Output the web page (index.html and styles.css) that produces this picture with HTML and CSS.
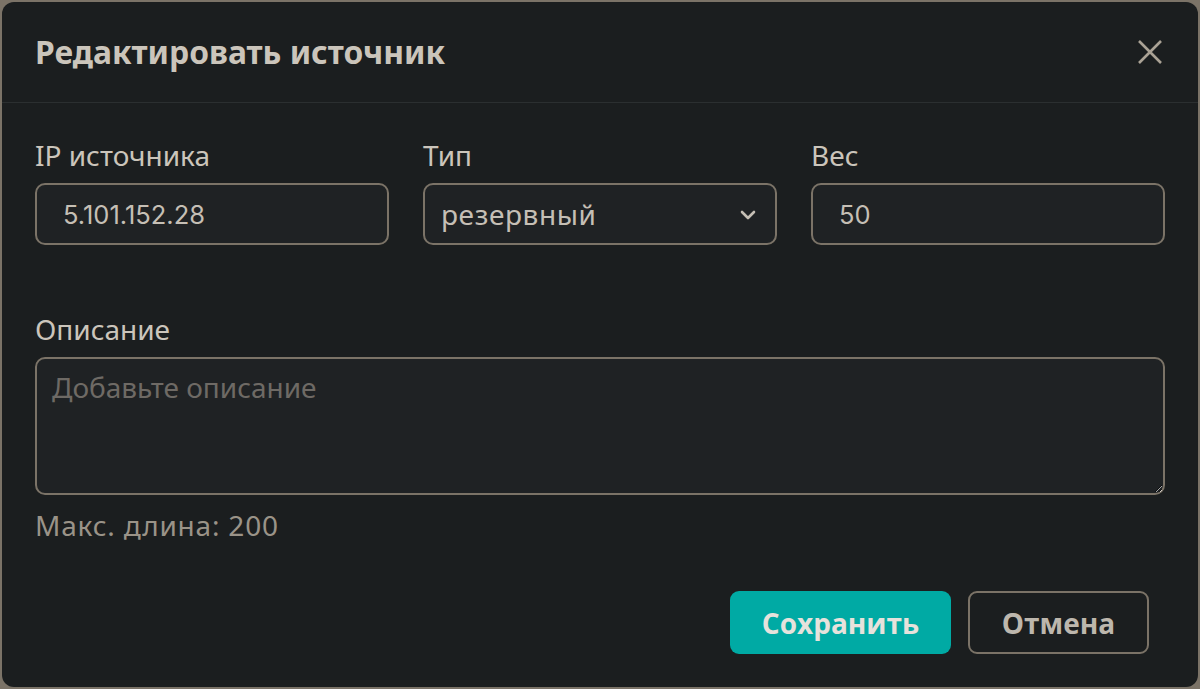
FILE: index.html
```html
<!DOCTYPE html>
<html lang="ru">
<head>
<meta charset="utf-8">
<title>Редактировать источник</title>
<link rel="stylesheet" href="styles.css">
</head>
<body>
<div class="dialog">
  <div class="dialog-header">
    <h2 class="dialog-title">Редактировать источник</h2>
    <button class="close-btn" aria-label="Закрыть">
      <svg width="26" height="26" viewBox="0 0 26 26"><path d="M2 2 L24 24 M24 2 L2 24" stroke="currentColor" stroke-width="2.6" fill="none"/></svg>
    </button>
  </div>
  <div class="dialog-body">
    <div class="row">
      <div class="field">
        <label class="label">IP источника</label>
        <input class="input" type="text" value="5.101.152.28">
      </div>
      <div class="field">
        <label class="label">Тип</label>
        <div class="select">
          <span class="select-value">резервный</span>
          <svg class="chevron" width="16" height="10" viewBox="0 0 16 10"><path d="M2 2 L8 8 L14 2" stroke="currentColor" stroke-width="2.6" fill="none" stroke-linecap="round" stroke-linejoin="round"/></svg>
        </div>
      </div>
      <div class="field">
        <label class="label">Вес</label>
        <input class="input" type="text" value="50">
      </div>
    </div>
    <div class="field desc">
      <label class="label">Описание</label>
      <textarea class="textarea" placeholder="Добавьте описание"></textarea>
      <div class="hint">Макс. длина: 200</div>
    </div>
    <div class="footer">
      <button class="btn btn-primary">Сохранить</button>
      <button class="btn btn-secondary">Отмена</button>
    </div>
  </div>
</div>
</body>
</html>
```
FILE: styles.css
```css
* { box-sizing: border-box; }
html, body { margin: 0; padding: 0; }
body {
  width: 1200px;
  height: 689px;
  background: #7b7367;
  padding: 2px;
  font-family: "Noto Sans", "Open Sans", sans-serif;
  color: #c9c3b9;
  overflow: hidden;
}
.dialog {
  width: 1196px;
  height: 685px;
  background: #1b1e1f;
  border-radius: 12px;
  display: flex;
  flex-direction: column;
}
.dialog-header {
  height: 101px;
  border-bottom: 1px solid #2b2f30;
  display: flex;
  align-items: center;
  justify-content: space-between;
  padding: 0 35px 0 33px;
}
.dialog-title {
  margin: 0;
  font-size: 31.8px;
  font-weight: 700;
  color: #cbc5bb;
  line-height: 38px;
}
.close-btn {
  background: none;
  border: 0;
  padding: 0;
  width: 26px;
  height: 26px;
  color: #aaa295;
  display: flex;
}
.dialog-body {
  padding: 35px 33px 33px 33px;
  display: flex;
  flex-direction: column;
  flex: 1;
}
.row {
  display: grid;
  grid-template-columns: minmax(0, 1fr) minmax(0, 1fr) minmax(0, 1fr);
  column-gap: 34px;
}
.field { display: flex; flex-direction: column; min-width: 0; }
.label {
  font-size: 28px;
  line-height: 34px;
  margin-bottom: 11px;
  color: #cbc5bb;
}
.input {
  width: 100%;
  height: 62px;
  background: #1f2224;
  border: 2px solid #7b7367;
  border-radius: 10px;
  padding: 0 26px;
  font-family: Inter, "Noto Sans", sans-serif;
  font-size: 25.5px;
  color: #c5bfb5;
  outline: none;
}
.select {
  height: 62px;
  background: #1f2224;
  border: 2px solid #7b7367;
  border-radius: 10px;
  padding: 0 19px 0 16px;
  display: flex;
  align-items: center;
  justify-content: space-between;
}
.select-value {
  font-size: 28px;
  letter-spacing: 0.6px;
  color: #c5bfb5;
  line-height: 34px;
}
.chevron { color: #c5bfb5; margin-top: 2px; }
.desc { margin-top: 67px; }
.textarea {
  height: 138px;
  background: #1f2224;
  border: 2px solid #7b7367;
  border-radius: 10px;
  padding: 11px 15px;
  font-family: "Noto Sans", sans-serif;
  font-size: 28px;
  line-height: 34px;
  color: #c5bfb5;
  resize: vertical;
  outline: none;
  color-scheme: dark;
}
.textarea::placeholder { color: #6e6a65; }
.hint {
  margin-top: 13px;
  font-size: 28px;
  line-height: 34px;
  letter-spacing: 0.8px;
  color: #9a9388;
}
.footer {
  margin-top: auto;
  display: flex;
  justify-content: flex-end;
  gap: 17px;
  padding-right: 16px;
}
.btn {
  height: 63px;
  border-radius: 9px;
  font-family: "Open Sans", "Noto Sans", sans-serif;
  font-size: 28px;
  font-weight: 700;
  padding: 0;
}
.btn-primary {
  width: 221px;
  background: #00aaa4;
  border: 0;
  color: #e6e2dc;
}
.btn-secondary {
  width: 181px;
  background: transparent;
  border: 2px solid #7b7367;
  color: #bdb7ad;
}
```
